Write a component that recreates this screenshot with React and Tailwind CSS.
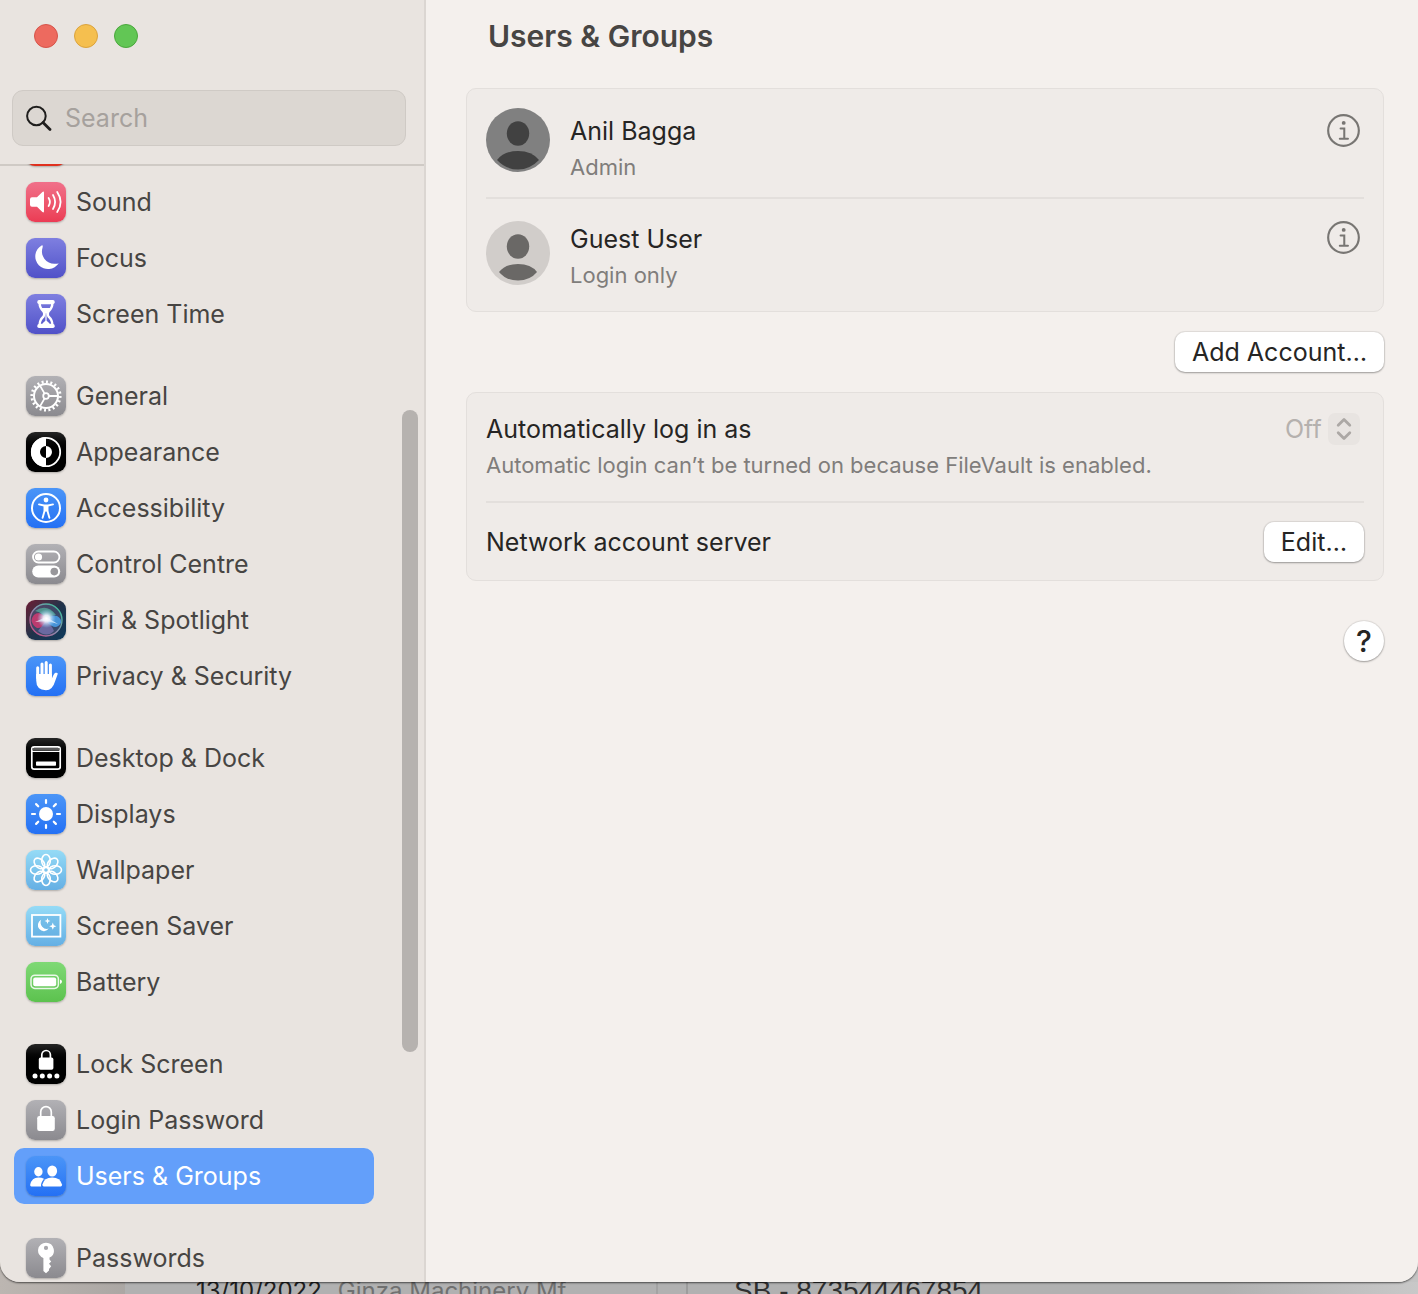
import { useState } from 'react';
import clsx from 'clsx';

const EIGHT = [0, 45, 90, 135, 180, 225, 270, 315];

const glyphs = {
  notifications: null,
  sound: (
    <>
      <path d="M6 15.3h5l5.4-5.2q1.6-1.2 1.6.6v18.6q0 1.8-1.6.6L11 24.7H6q-2 0-2-2v-5.4q0-2 2-2z" fill="#fff" />
      <path d="M22.6 16q2.6 4 0 8M27 13q4.2 7 0 14M31.2 10q6.8 10 0 20" fill="none" stroke="#fff" strokeWidth="1.8" strokeLinecap="round" />
    </>
  ),
  focus: <path d="M15.6 7.4A12.7 12.7 0 1 0 32.7 25.2Q31 26 28.6 25.8A12.4 12.4 0 0 1 16.6 9.4Q17.2 6.8 15.6 7.4z" fill="#fff" />,
  screenTime: (
    <g fill="#fff">
      <rect x="11.3" y="6" width="17.4" height="4" rx="1.7" />
      <rect x="11.3" y="30" width="17.4" height="4" rx="1.7" />
      <path d="M13.6 9q0 5 4 8.6 1.4 2.4 0 4.8-4 3.600-4 8.600h12.800q0-5-4-8.600-1.400-2.400 0-4.800 4-3.600 4-8.600z" fill="none" stroke="#fff" strokeWidth="2.4" />
      <path d="M15.4 14h9.2L20 20zM15.4 31Q18 27 20 26.4q2 .6 4.6 4.6z" />
      <path d="M19.4 18h1.2v9h-1.2z" />
    </g>
  ),
  general: (
    <g fill="none" stroke="#fff">
      <circle cx="20" cy="20" r="12" strokeWidth="2" />
      <circle cx="20" cy="20" r="14.2" strokeWidth="2.8" pathLength="40" strokeDasharray="0.9 1.1" />
      <circle cx="20" cy="20" r="2.8" strokeWidth="1.8" />
      <path d="M22.8 20H32M18.6 17.6L14 9.6M18.6 22.4L14 30.4" strokeWidth="1.8" />
    </g>
  ),
  appearance: (
    <>
      <circle cx="20" cy="20" r="14.2" fill="none" stroke="#fff" strokeWidth="1.8" />
      <path d="M20 5a15 15 0 0 0 0 30V26a6 6 0 0 1 0-12zM20 14a6 6 0 0 1 0 12z" fill="#fff" />
    </>
  ),
  accessibility: (
    <>
      <circle cx="20" cy="20" r="14" fill="none" stroke="#fff" strokeWidth="2" />
      <circle cx="20" cy="12" r="2.4" fill="#fff" />
      <path d="M13 16.4l5 1.1h4l5-1.1M18.6 17.6v5.2l-2 7M21.4 17.6v5.2l2 7" fill="none" stroke="#fff" strokeWidth="1.9" strokeLinecap="round" strokeLinejoin="round" />
      <path d="M17.8 17h4.4v6.6h-4.4z" fill="#fff" />
    </>
  ),
  controlCentre: (
    <>
      <rect x="7" y="7.5" width="26.4" height="11" rx="5.5" fill="none" stroke="#fff" strokeWidth="1.8" />
      <circle cx="12.5" cy="13" r="3.6" fill="#fff" />
      <rect x="6.2" y="21.6" width="28" height="12" rx="6" fill="#fff" />
      <circle cx="28.3" cy="27.6" r="3.8" fill="#98979b" />
    </>
  ),
  siri: (
    <>
      <defs>
        <radialGradient id="siriCore">
          <stop offset="0" stopColor="#fff" />
          <stop offset="0.35" stopColor="#f2f4ff" stopOpacity="0.9" />
          <stop offset="1" stopColor="#8fd0ff" stopOpacity="0" />
        </radialGradient>
        <linearGradient id="siriRing" x1="0" y1="1" x2="1" y2="0">
          <stop offset="0" stopColor="#d0407c" />
          <stop offset="0.5" stopColor="#8a8fb0" />
          <stop offset="1" stopColor="#2fc796" />
        </linearGradient>
      </defs>
      <circle cx="20" cy="20" r="16" fill="#4a5578" fillOpacity="0.65" stroke="url(#siriRing)" strokeWidth="1.4" />
      <path d="M5.500 21q1-8 7.500-8 6 2 8 7-4 9-10 8-4-2-5.500-7z" fill="#d93a72" fillOpacity="0.8" />
      <path d="M19 20q6-6 12-4 5 3 4 7-4 6-9 3-4-2-7-6z" fill="#4aa0ea" fillOpacity="0.85" />
      <path d="M9 11q12-8 21 4-5 0-10 5-2-7-11-9z" fill="#55b39f" fillOpacity="0.7" />
      <path d="M20 20q-4 6-8 11 9 7 16 0-3-7-8-11z" fill="#7f78b8" fillOpacity="0.7" />
      <path d="M9 22l11-5 12 7-11-3z" fill="#fff" fillOpacity="0.7" />
      <circle cx="20.5" cy="18.5" r="9.5" fill="url(#siriCore)" />
    </>
  ),
  privacy: (
    <>
      <path d="M11.7 11.8v10M16 8v12M20.2 6.6V20M24.4 9v12" stroke="#fff" strokeWidth="3" strokeLinecap="round" />
      <path d="M10.2 18h15.7v4.4q2-5 3.6-5.6 2-.5 2.3 1-1.2 3.5-2.8 7.7-2.4 8.7-9 8.7-9.8 0-9.8-9.6z" fill="#fff" />
    </>
  ),
  desktop: (
    <>
      <rect x="5.8" y="8.8" width="28.4" height="22.4" rx="2.4" fill="none" stroke="#fff" strokeWidth="1.7" />
      <path d="M6 11h28" stroke="#777" strokeWidth="1.6" />
      <path d="M6 13.4h28" stroke="#fff" strokeWidth="1.4" />
      <rect x="10" y="23.6" width="20" height="4.2" rx="0.8" fill="#fff" />
    </>
  ),
  displays: (
    <>
      <circle cx="20" cy="20" r="7" fill="#fff" />
      {EIGHT.map((a) => (
        <path key={a} d="M20 9V6" stroke="#fff" strokeWidth="2.2" strokeLinecap="round" transform={`rotate(${a} 20 20)`} />
      ))}
    </>
  ),
  wallpaper: (
    <g fill="none" stroke="#fff" strokeWidth="1.6">
      {EIGHT.map((a) => (
        <ellipse key={a} cx="20" cy="10.7" rx="4.3" ry="6.2" transform={`rotate(${a} 20 20)`} />
      ))}
      <circle cx="20" cy="20" r="2.6" />
    </g>
  ),
  screenSaver: (
    <>
      <rect x="6" y="9" width="28.4" height="21.6" fill="#5aa5dc" fillOpacity="0.35" stroke="#fff" strokeWidth="1.8" />
      <path d="M15.2 13.8a6 6 0 1 0 7.6 8.8 6.4 6.4 0 0 1-7.6-8.8z" fill="#fff" />
      <path d="M21.5 12l.8 2.200 2.200.8-2.200.8-.8 2.200-.8-2.200-2.200-.8 2.200-.8zM26.800 16.600l1 2.600 2.600 1-2.600 1-1 2.600-1-2.600-2.600-1 2.600-1z" fill="#fff" />
    </>
  ),
  battery: (
    <>
      <rect x="5" y="13.2" width="27.4" height="13.2" rx="3.8" fill="none" stroke="#fff" strokeOpacity="0.85" strokeWidth="1.5" />
      <rect x="7.2" y="15.4" width="23" height="8.8" rx="2" fill="#fff" />
      <path d="M34 17.6q2 .6 2 2.200t-2 2.200z" fill="#fff" />
    </>
  ),
  lockScreen: (
    <>
      <rect x="12.8" y="13.6" width="14.6" height="12.200" rx="1.8" fill="#fff" />
      <path d="M15.800 14v-3.200a4.300 4.300 0 0 1 8.600 0V14" fill="none" stroke="#fff" strokeWidth="1.7" />
      {[9, 16.3, 23.6, 30.9].map((x) => (
        <circle key={x} cx={x} cy="31.9" r="2.5" fill="#fff" />
      ))}
    </>
  ),
  loginPassword: (
    <>
      <rect x="11.2" y="16" width="17.6" height="15" rx="2.2" fill="#fff" />
      <path d="M14.700 16.500v-4.600a5.300 5.300 0 0 1 10.600 0v4.600" fill="none" stroke="#fff" strokeWidth="1.7" />
    </>
  ),
  users: (
    <g fill="#fff">
      <ellipse cx="12.4" cy="15.8" rx="4.2" ry="4.7" />
      <path d="M18 22.800q-2.400-1.400-5.600-1.400-6.600 0-8.200 7.200-.3 2 1.200 2H15.200q-1-3 2.800-7.800z" />
      <ellipse cx="26.2" cy="15" rx="4.9" ry="5.5" />
      <path d="M26.2 21.6q8.200 0 9.800 7 .2 2-1.400 2H17.8q-1.600 0-1.400-2 1.600-7 9.8-7z" />
    </g>
  ),
  passwords: (
    <path
      d="M20 4.800a7.800 7.800 0 0 1 3.500 14.800v2l1.700 1.900-2.200 2.300 2.200 2.500-2.200 2.600v1.600L20 35.200l-2.600-2.200V20A7.800 7.800 0 0 1 20 4.800zm0 3a2.100 2.100 0 1 0 0 4.200 2.100 2.100 0 0 0 0-4.200z"
      fill="#fff"
      fillRule="evenodd"
    />
  ),
};

const tones = {
  red: 'bg-[#e0301e]',
  pink: 'bg-linear-to-b from-[#f0708a] to-[#eb3b54]',
  indigo: 'bg-linear-to-b from-[#7f7fe0] to-[#5151c8]',
  gray: 'bg-linear-to-b from-[#b2b1b5] to-[#8b8a8f]',
  black: 'bg-linear-to-b from-[#262626] to-black to-50%',
  blue: 'bg-linear-to-b from-[#4b95f7] to-[#2470f4]',
  siri: 'bg-linear-to-br from-[#6a1634] via-[#20324a] to-[#0a3a5c]',
  sky: 'bg-linear-to-b from-[#95dbf6] to-[#65afe4]',
  green: 'bg-linear-to-b from-[#7fd975] to-[#5cc24e]',
};

const groups = [
  [
    { id: 'notifications', tone: 'red' },
    { id: 'sound', label: 'Sound', tone: 'pink' },
    { id: 'focus', label: 'Focus', tone: 'indigo' },
    { id: 'screenTime', label: 'Screen Time', tone: 'indigo' },
  ],
  [
    { id: 'general', label: 'General', tone: 'gray' },
    { id: 'appearance', label: 'Appearance', tone: 'black' },
    { id: 'accessibility', label: 'Accessibility', tone: 'blue' },
    { id: 'controlCentre', label: 'Control Centre', tone: 'gray' },
    { id: 'siri', label: 'Siri & Spotlight', tone: 'siri' },
    { id: 'privacy', label: 'Privacy & Security', tone: 'blue' },
  ],
  [
    { id: 'desktop', label: 'Desktop & Dock', tone: 'black' },
    { id: 'displays', label: 'Displays', tone: 'blue' },
    { id: 'wallpaper', label: 'Wallpaper', tone: 'sky' },
    { id: 'screenSaver', label: 'Screen Saver', tone: 'sky' },
    { id: 'battery', label: 'Battery', tone: 'green' },
  ],
  [
    { id: 'lockScreen', label: 'Lock Screen', tone: 'black' },
    { id: 'loginPassword', label: 'Login Password', tone: 'gray' },
    { id: 'users', label: 'Users & Groups', tone: 'blue' },
  ],
  [{ id: 'passwords', label: 'Passwords', tone: 'gray' }],
];

function NavItem({ item, active, onSelect }) {
  return (
    <li>
      <a
        href={`#${item.id}`}
        onClick={() => onSelect(item.id)}
        className={clsx(
          'flex h-14 items-center gap-2.5 rounded-[10px] px-3',
          active ? 'bg-[#639ffa] text-white' : 'text-[#474543]'
        )}
      >
        <span className={clsx('size-10 shrink-0 overflow-hidden rounded-[9px] shadow-[0_1px_2px_rgba(0,0,0,0.25)]', tones[item.tone])}>
          <svg viewBox="0 0 40 40" className="size-10" aria-hidden="true">
            {glyphs[item.id]}
          </svg>
        </span>
        {item.label}
      </a>
    </li>
  );
}

function Sidebar() {
  const [active, setActive] = useState('users');

  return (
    <aside className="flex w-[426px] shrink-0 flex-col border-r-2 border-[#dbd6d2] bg-[#e9e4e0]">
      <div className="flex gap-4 px-[34px] pt-6">
        <button aria-label="Close" className="size-6 rounded-full border border-[#d6544a] bg-[#ed6a5f]" />
        <button aria-label="Minimise" className="size-6 rounded-full border border-[#dba33d] bg-[#f5bf4f]" />
        <button aria-label="Zoom" className="size-6 rounded-full border border-[#4aa73c] bg-[#62c655]" />
      </div>

      <label className="mt-[42px] mr-[18px] ml-3 flex h-14 items-center gap-3 rounded-[11px] border border-[#cfcac5] bg-[#dcd7d2] pl-3">
        <svg viewBox="0 0 28 28" className="size-7 shrink-0" fill="none" stroke="#1f1e1d" aria-hidden="true">
          <circle cx="11.4" cy="12" r="9.3" strokeWidth="2" />
          <path d="M18 18.6l7 7" strokeWidth="2.8" strokeLinecap="round" />
        </svg>
        <input
          type="text"
          placeholder="Search"
          aria-label="Search"
          className="w-full min-w-0 bg-transparent outline-none placeholder:text-[#a6a19d]"
        />
      </label>

      {/* List is scrolled part way down, so its first entry is cut by the divider */}
      <div className="relative mt-[18px] min-h-0 flex-1 overflow-hidden shadow-[inset_0_2px_0_#cfcac5]">
        <nav className="-mt-[46px] mr-[50px] ml-3.5 flex flex-col gap-[26px]">
          {groups.map((group, idx) => (
            <ul key={idx}>
              {group.map((item) => (
                <NavItem key={item.id} item={item} active={item.id === active} onSelect={setActive} />
              ))}
            </ul>
          ))}
        </nav>
        <div className="absolute top-[246px] right-1.5 h-[642px] w-4 rounded-full bg-[#b6b2af]" />
      </div>
    </aside>
  );
}

function Avatar({ dark }) {
  return (
    <svg viewBox="0 0 64 64" className="size-16 shrink-0" aria-hidden="true">
      <circle cx="32" cy="32" r="32" fill={dark ? '#808080' : '#d1cdca'} />
      <g fill={dark ? '#414141' : '#6a6866'}>
        <ellipse cx="32" cy="25.5" rx="11.2" ry="12.2" />
        {dark ? (
          <path d="M11 52Q18 43 32 43t21 9Q44 61.500 32 61.500T11 52z" />
        ) : (
          <path d="M13 51Q19 43 32 43t19 8q-7 8.500-19 8.500t-19-8.500z" />
        )}
      </g>
    </svg>
  );
}

function InfoButton({ name }) {
  return (
    <button aria-label={`Details for ${name}`} className="mr-1 size-[33px]">
      <svg viewBox="0 0 34 34" fill="none" stroke="#787673">
        <circle cx="17" cy="17" r="15.8" strokeWidth="2.2" />
        <path d="M14 15h3.8v10.2M13.2 25.4h8.4" strokeWidth="2.1" strokeLinecap="round" />
        <circle cx="17.2" cy="9.2" r="2" fill="#787673" stroke="none" />
      </svg>
    </button>
  );
}

function Card({ children }) {
  return <section className="rounded-[10px] border border-[#e3dfdc] bg-[#efebe8] px-[19px]">{children}</section>;
}

function PushButton({ children }) {
  return (
    <button className="h-10 rounded-[10px] bg-white px-[17px] text-[#262524] shadow-[0_0_1px_1px_rgba(0,0,0,0.08),0_1px_2px_rgba(0,0,0,0.3)]">
      {children}
    </button>
  );
}

function UsersPane() {
  return (
    <main className="flex-1 bg-[#f4f0ed] pr-[34px] pl-10 text-[#262524]">
      <h1 className="px-[22px] pt-4 pb-8 text-[30px] leading-10 font-semibold text-[#474543]">Users &amp; Groups</h1>

      <Card>
        <div className="flex h-[110px] gap-5 border-b-2 border-[#e3dfdc] pt-[19px]">
          <Avatar dark />
          <div className="pt-[5px]">
            <p className="leading-9">Anil Bagga</p>
            <p className="text-[22px] leading-9 text-[#807d7b]">Admin</p>
          </div>
          <div className="ml-auto pt-1.5">
            <InfoButton name="Anil Bagga" />
          </div>
        </div>
        <div className="flex h-28 gap-5 pt-[22px]">
          <Avatar />
          <div>
            <p className="leading-9">Guest User</p>
            <p className="text-[22px] leading-9 text-[#807d7b]">Login only</p>
          </div>
          <div className="ml-auto">
            <InfoButton name="Guest User" />
          </div>
        </div>
      </Card>

      <div className="my-5 flex justify-end">
        <PushButton>Add Account…</PushButton>
      </div>

      <Card>
        <div className="flex h-[110px] items-start justify-between border-b-2 border-[#e3dfdc] pt-[18px]">
          <div>
            <label htmlFor="autologin" className="block leading-9">Automatically log in as</label>
            <p className="text-[22px] leading-9 text-[#807d7b]">Automatic login can’t be turned on because FileVault is enabled.</p>
          </div>
          <div className="flex items-center gap-1.5 pt-0.5 pr-1">
            <select id="autologin" disabled className="appearance-none leading-8 text-[#b5b1ae] opacity-100">
              <option>Off</option>
            </select>
            <svg viewBox="0 0 32 32" className="size-8 rounded-[7px] bg-[#e8e4e1]" fill="none" stroke="#aca8a5" strokeWidth="2.8" strokeLinecap="round" strokeLinejoin="round" aria-hidden="true">
              <path d="M10.2 12.2L16 6.4l5.8 5.8M10.2 19.8L16 25.6l5.8-5.8" />
            </svg>
          </div>
        </div>
        <div className="flex h-[77px] items-center justify-between">
          <p>Network account server</p>
          <PushButton>Edit…</PushButton>
        </div>
      </Card>

      <div className="mt-10 flex justify-end">
        <button className="size-10 rounded-full bg-white text-[30px] leading-10 font-medium shadow-[0_0_1px_1px_rgba(0,0,0,0.08),0_1px_2px_rgba(0,0,0,0.3)]">
          ?
        </button>
      </div>
    </main>
  );
}

export default function App() {
  return (
    <div className="flex h-screen flex-col overflow-hidden bg-linear-to-r from-[#bcb6b1] via-[#a9a5a2] via-10% to-[#c4c4c4] font-[Inter,sans-serif] text-[25px] leading-9">
      <div className="z-10 flex min-h-0 flex-1 overflow-hidden rounded-b-[20px] shadow-[0_1px_2px_rgba(0,0,0,0.6)]">
        <Sidebar />
        <UsersPane />
      </div>

      {/* Sliver of the spreadsheet behind the window */}
      <div className="ml-[125px] flex h-3 overflow-hidden bg-linear-to-r from-[#b1b1b1] from-85% to-[#c8c8c8] text-[24px] leading-[18px] whitespace-nowrap">
        <div className="flex w-[533px] shrink-0 gap-4 border-r-2 border-[#a3a3a3] pl-[71px]">
          <span className="text-[#202020]">13/10/2022</span>
          <span className="text-[#707070]">Ginza Machinery Mf</span>
        </div>
        <div className="w-[30px] shrink-0 border-r-2 border-[#9d9d9d]" />
        <span className="pl-[46px] font-['Liberation_Sans',sans-serif] text-[28px] leading-[18px] text-[#303030]">SB - 873544467854</span>
      </div>
    </div>
  );
}
